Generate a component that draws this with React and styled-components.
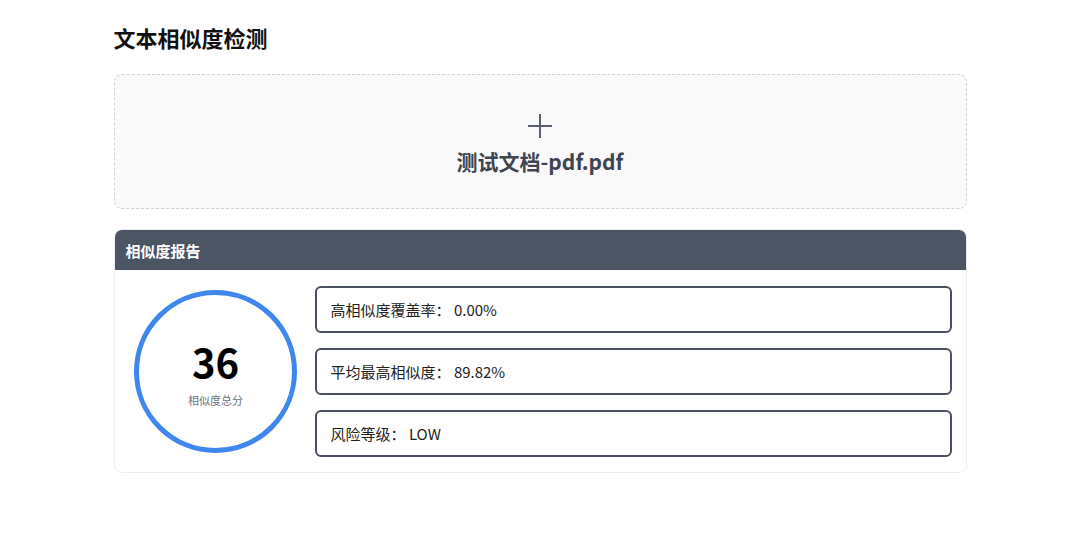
import React from "react";
import styled, { createGlobalStyle } from "styled-components";

const GlobalStyle = createGlobalStyle`
  body {
    margin: 0;
    background: #ffffff;
    font-family: "Noto Sans CJK SC", "Noto Sans", sans-serif;
    color: #111827;
  }
`;

const Page = styled.div`
  width: 853px;
  margin: 0 auto;
  padding-top: 21px;
`;

const Title = styled.h1`
  margin: 0 0 21px;
  font-size: 22px;
  line-height: 32px;
  font-weight: 700;
  color: #111;
`;

const Upload = styled.div`
  height: 135px;
  border: 1px dashed #cfd2d6;
  border-radius: 8px;
  background: #f9f9fa;
  display: flex;
  flex-direction: column;
  align-items: center;
  justify-content: center;
  gap: 8px;
  padding-top: 4px;
  box-sizing: border-box;
`;

const FileName = styled.div`
  font-size: 21px;
  font-weight: 700;
  color: #3f4451;
  line-height: 28px;
`;

const Card = styled.section`
  margin-top: 20px;
  border: 1px solid #eceef1;
  border-radius: 8px;
  overflow: hidden;
`;

const CardHeader = styled.div`
  height: 40px;
  background: #4b5563;
  color: #fff;
  font-size: 15px;
  font-weight: 700;
  display: flex;
  align-items: center;
  padding: 0 11px;
`;

const CardBody = styled.div`
  display: flex;
  align-items: center;
  gap: 14px;
  padding: 16px 14px 15px 16px;
`;

const ScoreCol = styled.div`
  width: 170px;
  display: flex;
  justify-content: center;
`;

const Ring = styled.div`
  width: 153px;
  height: 153px;
  border: 5px solid #3f86ee;
  border-radius: 50%;
  display: flex;
  flex-direction: column;
  align-items: center;
  justify-content: center;
`;

const Score = styled.div`
  font-size: 40px;
  font-weight: 700;
  line-height: 42px;
  color: #000;
  margin-top: 4px;
`;

const ScoreLabel = styled.div`
  font-size: 11px;
  line-height: 16px;
  color: #6b7280;
  margin-top: 10px;
`;

const Stats = styled.div`
  flex: 1;
  display: flex;
  flex-direction: column;
  gap: 15px;
`;

const Stat = styled.div`
  height: 43px;
  border: 2px solid #4b5060;
  border-radius: 6px;
  display: flex;
  align-items: center;
  padding: 0 14px;
  font-size: 15px;
  color: #222;
`;

const PlusIcon = () => (
  <svg width="26" height="26" viewBox="0 0 26 26">
    <path d="M13 1v24M1 13h24" stroke="#5b6070" strokeWidth="2" />
  </svg>
);

export default function App() {
  const stats = [
    ["高相似度覆盖率", "0.00%"],
    ["平均最高相似度", "89.82%"],
    ["风险等级", "LOW"],
  ];
  return (
    <>
      <GlobalStyle />
      <Page>
        <Title>文本相似度检测</Title>
        <Upload>
          <PlusIcon />
          <FileName>测试文档-pdf.pdf</FileName>
        </Upload>
        <Card>
          <CardHeader>相似度报告</CardHeader>
          <CardBody>
            <ScoreCol>
              <Ring>
                <Score>36</Score>
                <ScoreLabel>相似度总分</ScoreLabel>
              </Ring>
            </ScoreCol>
            <Stats>
              {stats.map(([k, v]) => (
                <Stat key={k}>
                  {k}：&nbsp;{v}
                </Stat>
              ))}
            </Stats>
          </CardBody>
        </Card>
      </Page>
    </>
  );
}
